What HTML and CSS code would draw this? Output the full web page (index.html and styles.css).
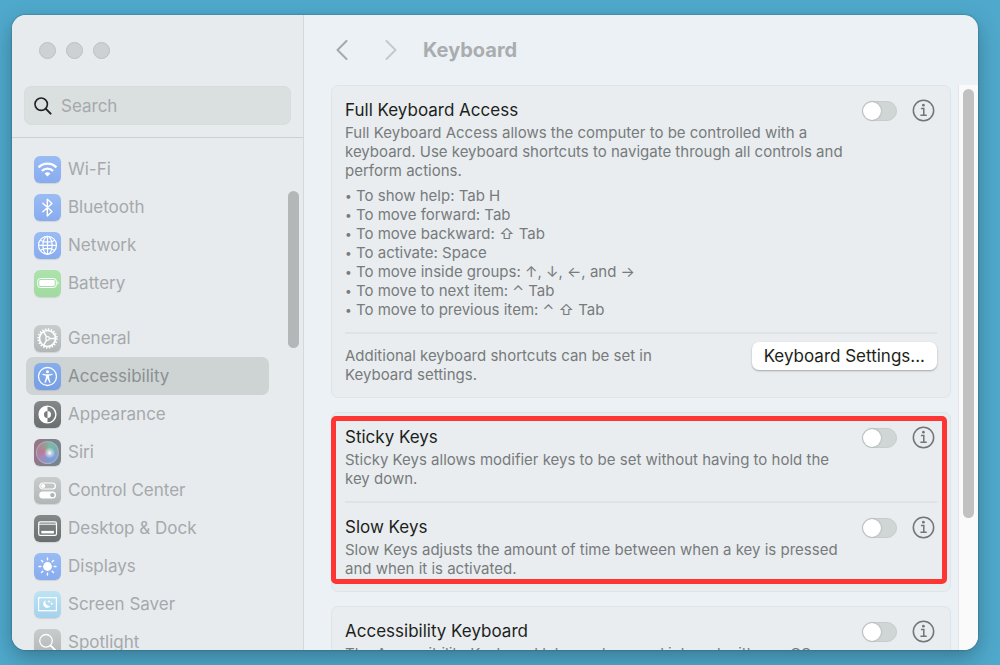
FILE: index.html
```html
<!DOCTYPE html>
<html lang="en">
<head>
  <meta charset="UTF-8">
  <meta name="viewport" content="width=device-width, initial-scale=1.0">
  <title>Keyboard</title>
  <link rel="stylesheet" href="styles.css">
</head>
<body>
  <div class="window">

    <aside class="sidebar">
      <div class="window-buttons">
        <button type="button" aria-label="Close"></button>
        <button type="button" aria-label="Minimize"></button>
        <button type="button" aria-label="Zoom"></button>
      </div>

      <label class="search">
        <svg width="18" height="18" viewBox="0 0 18 18" fill="none" stroke="#222" stroke-linecap="round"><circle cx="7.2" cy="7.2" r="6.2" stroke-width="1.6"/><path d="M11.9 11.9 16.6 16.6" stroke-width="2"/></svg>
        <input type="search" placeholder="Search" aria-label="Search">
      </label>

      <nav class="sidebar-nav">
        <ul>
          <li><a href="#wifi"><span class="icon blue"><svg viewBox="0 0 27 27" fill="none" stroke="#fff" stroke-width="2.3"><path d="M4.6 11.4a12.6 12.6 0 0 1 17.8 0M7.9 14.9a8 8 0 0 1 11.2 0"/><path d="M10.6 17.6a4.2 4.2 0 0 1 5.8 0L13.5 20.6z" fill="#fff" stroke="none"/></svg></span>Wi-Fi</a></li>
          <li><a href="#bluetooth"><span class="icon blue"><svg viewBox="0 0 27 27" fill="none" stroke="#fff" stroke-width="1.4" stroke-linejoin="round" stroke-linecap="round"><path d="M8.8 9.2 18 17.6 13.3 21.9V5.2L18 9.4 8.8 17.8"/></svg></span>Bluetooth</a></li>
          <li><a href="#network"><span class="icon blue"><svg viewBox="0 0 27 27" fill="none" stroke="#fff" stroke-width="1.2"><circle cx="13.5" cy="13.3" r="9"/><path d="M13.5 4.3v18M4.5 13.3h18M6.3 8.2c4.2 2.6 10.2 2.6 14.4 0M6.3 18.4c4.2-2.6 10.2-2.6 14.4 0"/><ellipse cx="13.5" cy="13.3" rx="4.6" ry="9"/></svg></span>Network</a></li>
          <li><a href="#battery"><span class="icon green"><svg viewBox="0 0 27 27"><rect x="3.7" y="8.5" width="18.6" height="9" rx="2.6" fill="none" stroke="#fff"/><rect x="5.3" y="10.1" width="15.4" height="5.8" rx="1.2" fill="#fff"/><path d="M23.5 11.3c1.5.5 1.5 2.9 0 3.4z" fill="#fff"/></svg></span>Battery</a></li>
        </ul>
        <ul>
          <li><a href="#general"><span class="icon gray"><svg viewBox="0 0 27 27" fill="none" stroke="#fff"><circle cx="13.5" cy="13.5" r="8" stroke-width="1.7"/><circle cx="13.5" cy="13.5" r="9.4" stroke-width="1.6" stroke-dasharray="1.48 1.48"/><circle cx="13.5" cy="13.5" r="1.8" stroke-width="1.2"/><path d="M15.4 13.5h6.1M12.6 11.9 9.5 6.6M12.6 15.1l-3.1 5.3" stroke-width="1.4"/></svg></span>General</a></li>
          <li><a href="#accessibility" class="selected" aria-current="page"><span class="icon blue"><svg viewBox="0 0 27 27" fill="none" stroke="#fff"><circle cx="13.5" cy="13.5" r="9" stroke-width="1.3"/><circle cx="13.5" cy="8.8" r="1.5" fill="#fff" stroke="none"/><path d="M8.9 11.3l3.3.8h2.6l3.3-.8" stroke-width="1.2" stroke-linecap="round"/><path d="M12.2 11.7h2.6l.3 3.3 1.4 4.5-1 .3-2-4.6-2 4.6-1-.3 1.4-4.5z" fill="#fff" stroke-width=".2"/></svg></span>Accessibility</a></li>
          <li><a href="#appearance"><span class="icon dark"><svg viewBox="0 0 27 27"><circle cx="13.5" cy="13.5" r="8.4" fill="none" stroke="#fff" stroke-width="1.4"/><path d="M13.5 5.1a8.4 8.4 0 0 0 0 16.8v-4.900a3.500 3.500 0 0 1 0-7z" fill="#fff"/><path d="M13.500 10a3.500 3.500 0 0 1 0 7z" fill="#fff"/></svg></span>Appearance</a></li>
          <li><a href="#siri"><span class="icon siri"><span class="siri-orb"></span></span>Siri</a></li>
          <li><a href="#control-center"><span class="icon gray"><svg viewBox="0 0 27 27"><rect x="5.8" y="6" width="15.6" height="6" rx="3" fill="none" stroke="#fff" stroke-width="1.2"/><circle cx="9.1" cy="9" r="2.1" fill="#fff"/><rect x="5.2" y="14.6" width="16.8" height="7" rx="3.5" fill="#fff"/><circle cx="18.4" cy="18.1" r="2.2" fill="#aeb1b2"/></svg></span>Control Center</a></li>
          <li><a href="#desktop-dock"><span class="icon dark"><svg viewBox="0 0 27 27"><rect x="4.7" y="6.8" width="17.8" height="13.6" rx="1.6" fill="none" stroke="#fff" stroke-width="1.2"/><path d="M4.7 9.2h17.8" stroke="#fff"/><rect x="7.3" y="15.9" width="12.6" height="2.5" fill="#fff"/></svg></span>Desktop &amp; Dock</a></li>
          <li><a href="#displays"><span class="icon blue"><svg viewBox="0 0 27 27" stroke="#fff" stroke-width="1.4" stroke-linecap="round"><circle cx="13.5" cy="13.5" r="4.4" fill="#fff" stroke="none"/><path d="M13.5 5v1.8M13.5 20.2V22M5 13.5h1.8M20.2 13.5H22M7.5 7.5l1.3 1.3M18.2 18.2l1.3 1.3M7.5 19.5l1.3-1.3M18.2 8.8l1.3-1.3"/></svg></span>Displays</a></li>
          <li><a href="#screen-saver"><span class="icon cyan"><svg viewBox="0 0 27 27"><rect x="4.6" y="6.7" width="17.8" height="13" fill="none" stroke="#fff" stroke-width="1.2"/><path d="M11.8 9.3a3.9 3.9 0 1 0 4.8 5.4 3.9 3.9 0 0 1-4.8-5.4z" fill="#fff"/><path d="M15 8.7l.5 1.2 1.2.5-1.2.5-.5 1.200-.5-1.200-1.200-.5 1.200-.5zM17.800 11.100l.5 1.200 1.200.5-1.200.5-.5 1.200-.5-1.200-1.200-.5 1.200-.5z" fill="#fff"/></svg></span>Screen Saver</a></li>
          <li><a href="#spotlight"><span class="icon gray"><svg viewBox="0 0 27 27" fill="none" stroke="#fff" stroke-linecap="round"><circle cx="12" cy="11.8" r="6.3" stroke-width="1.3"/><path d="M16.7 16.6l4.3 4.3" stroke-width="1.8"/></svg></span>Spotlight</a></li>
        </ul>
        <div class="sidebar-thumb"></div>
      </nav>
    </aside>

    <main class="main">
      <header class="toolbar">
        <button type="button" class="back" aria-label="Back"><svg width="12" height="20" viewBox="0 0 12 20"><path d="M10.5 1 1.5 10l9 9"/></svg></button>
        <button type="button" class="forward" aria-label="Forward" disabled><svg width="12" height="20" viewBox="0 0 12 20"><path d="M1.5 1l9 9-9 9"/></svg></button>
        <h1>Keyboard</h1>
      </header>

      <div class="scroll-area">
        <div class="cards">
          <section class="card">
            <div class="row">
              <div class="text">
                <h2><label for="full-access">Full Keyboard Access</label></h2>
                <p>Full Keyboard Access allows the computer to be controlled with a<br>keyboard. Use keyboard shortcuts to navigate through all controls and<br>perform actions.</p>
                <ul class="shortcuts">
                  <li>To show help: Tab H</li>
                  <li>To move forward: Tab</li>
                  <li>To move backward: ⇧ Tab</li>
                  <li>To activate: Space</li>
                  <li>To move inside groups: ↑, ↓, ←, and →</li>
                  <li>To move to next item: ⌃ Tab</li>
                  <li>To move to previous item: ⌃ ⇧ Tab</li>
                </ul>
              </div>
              <div class="controls">
                <input type="checkbox" role="switch" class="switch" id="full-access">
                <button type="button" class="info" aria-label="About Full Keyboard Access"><svg viewBox="0 0 24 24"><circle cx="12" cy="12" r="10.6"/><path d="M9.3 9.8h3v7M8.8 17h6.6"/><circle class="dot" cx="11.9" cy="6.4" r="1.4"/></svg></button>
              </div>
            </div>
            <div class="row">
              <p class="text">Additional keyboard shortcuts can be set in<br>Keyboard settings.</p>
              <button type="button" class="push-button">Keyboard Settings...</button>
            </div>
          </section>

          <section class="card highlighted">
            <div class="row">
              <div class="text">
                <h2><label for="sticky-keys">Sticky Keys</label></h2>
                <p>Sticky Keys allows modifier keys to be set without having to hold the<br>key down.</p>
              </div>
              <div class="controls">
                <input type="checkbox" role="switch" class="switch" id="sticky-keys">
                <button type="button" class="info" aria-label="About Sticky Keys"><svg viewBox="0 0 24 24"><circle cx="12" cy="12" r="10.6"/><path d="M9.3 9.8h3v7M8.8 17h6.6"/><circle class="dot" cx="11.9" cy="6.4" r="1.4"/></svg></button>
              </div>
            </div>
            <div class="row">
              <div class="text">
                <h2><label for="slow-keys">Slow Keys</label></h2>
                <p>Slow Keys adjusts the amount of time between when a key is pressed<br>and when it is activated.</p>
              </div>
              <div class="controls">
                <input type="checkbox" role="switch" class="switch" id="slow-keys">
                <button type="button" class="info" aria-label="About Slow Keys"><svg viewBox="0 0 24 24"><circle cx="12" cy="12" r="10.6"/><path d="M9.3 9.8h3v7M8.8 17h6.6"/><circle class="dot" cx="11.9" cy="6.4" r="1.4"/></svg></button>
              </div>
            </div>
          </section>

          <section class="card">
            <div class="row">
              <div class="text">
                <h2><label for="accessibility-keyboard">Accessibility Keyboard</label></h2>
                <p>The Accessibility Keyboard lets you type and interact with macOS</p>
              </div>
              <div class="controls">
                <input type="checkbox" role="switch" class="switch" id="accessibility-keyboard">
                <button type="button" class="info" aria-label="About Accessibility Keyboard"><svg viewBox="0 0 24 24"><circle cx="12" cy="12" r="10.6"/><path d="M9.3 9.8h3v7M8.8 17h6.6"/><circle class="dot" cx="11.9" cy="6.4" r="1.4"/></svg></button>
              </div>
            </div>
          </section>
        </div>
        <div class="scrollbar"><div class="thumb"></div></div>
      </div>
    </main>

  </div>
</body>
</html>
```
FILE: styles.css
```css
:root {
  --font: Inter, "Liberation Sans", sans-serif;
  --desktop: #4fa9cc;
  --sidebar-bg: #e7ebee;
  --main-bg: #ecf1f5;
  --card-bg: #e9edf0;
  --line: #dfe3e5;
  --text: #1d1f20;
  --text-soft: #777b7c;
  --text-dim: #a5a9ab;
  --mark: #fd3634;
}

* {
  box-sizing: border-box;
}

body {
  margin: 0;
  height: 100vh;
  padding: 15px 22px 15px 12px;
  overflow: hidden;
  background: var(--desktop);
  color: var(--text);
  font-family: var(--font);
  font-size: 15px;
}

button {
  padding: 0;
  border: 0;
  background: none;
  font: inherit;
  color: inherit;
}

ul {
  margin: 0;
  padding: 0;
  list-style: none;
}

.window {
  display: flex;
  height: 100%;
  overflow: hidden;
  border-radius: 14px;
  background: var(--main-bg);
  box-shadow: 0 0 2px rgba(0, 0, 0, 0.4), 0 8px 22px rgba(0, 0, 0, 0.28);
}

/* sidebar */

.sidebar {
  display: flex;
  flex-direction: column;
  flex: none;
  width: 292px;
  background: var(--sidebar-bg);
  border-right: 1px solid #d3d8db;
}

.window-buttons {
  display: flex;
  gap: 10px;
  padding: 27px 27px 0;
}

.window-buttons button {
  width: 17px;
  height: 17px;
  border: 1px solid #bcc0c2;
  border-radius: 50%;
  background: #cdd1d3;
}

.search {
  display: flex;
  align-items: center;
  gap: 9px;
  height: 39px;
  margin: 27px 12px 12px;
  padding: 0 9px;
  border: 1px solid #d7dcdd;
  border-radius: 7px;
  background: #dadfe0;
}

.search input {
  flex: 1;
  min-width: 0;
  padding: 0;
  border: 0;
  outline: 0;
  background: none;
  font: inherit;
  font-size: 17px;
}

.search input::placeholder {
  color: var(--text-dim);
}

.sidebar-nav {
  position: relative;
  flex: 1;
  min-height: 0;
  overflow: hidden;
  padding: 12px 14px 0;
  border-top: 1px solid #cbd1d4;
}

.sidebar-nav ul + ul {
  margin-top: 17px;
}

.sidebar-nav a {
  display: flex;
  align-items: center;
  gap: 7px;
  height: 38px;
  margin-right: 20px;
  padding: 0 8px;
  border-radius: 7px;
  color: var(--text-dim);
  font-size: 17px;
  text-decoration: none;
}

.sidebar-nav a.selected {
  background: #ced4d4;
  color: #8b9091;
}

.sidebar-thumb {
  position: absolute;
  top: 53px;
  right: 4px;
  width: 11px;
  height: 157px;
  border-radius: 6px;
  background: #b3b7b8;
}

.icon {
  width: 27px;
  height: 27px;
  border-radius: 6px;
  box-shadow: 0 1px 1px rgba(0, 0, 0, 0.1);
}

.icon svg {
  display: block;
}

.icon.blue {
  background: linear-gradient(#9abcf4, #87abee);
}

.selected .icon.blue {
  background: linear-gradient(#86aeec, #779de4);
}

.icon.green {
  background: linear-gradient(#aee2ac, #a0dba0);
}

.icon.gray {
  background: linear-gradient(#c8cccd, #b2b6b7);
}

.icon.dark {
  background: linear-gradient(#858889, #6b6e6f);
}

.icon.cyan {
  background: linear-gradient(#bde4f4, #a4d1ea);
}

.icon.siri {
  padding: 2px;
  background: linear-gradient(100deg, #9d7288, #7f8088 50%, #75868e);
}

.siri-orb {
  display: block;
  height: 23px;
  border: 1px solid rgba(220, 220, 230, 0.3);
  border-radius: 50%;
  background:
    radial-gradient(circle at 60% 52%, #fff 0, rgba(255, 255, 255, 0.5) 14%, transparent 34%),
    conic-gradient(from 20deg, #7cb8a6, #78aeb4, #829fd8, #7f99d2, #a58ab8, #b97a98, #a0958f, #7cb8a6);
}

/* right pane */

.main {
  display: flex;
  flex-direction: column;
  flex: 1;
  min-width: 0;
}

.toolbar {
  display: flex;
  align-items: center;
  flex: none;
  height: 70px;
  padding: 0 32px;
}

.toolbar svg {
  display: block;
  fill: none;
  stroke: #a4a8aa;
  stroke-width: 2;
  stroke-linecap: round;
  stroke-linejoin: round;
}

.toolbar .forward {
  margin: 0 26px 0 37px;
}

.toolbar .forward svg {
  stroke: #c5c9cc;
}

h1 {
  margin: 0;
  color: #a9adaf;
  font-size: 20px;
  font-weight: 700;
}

.scroll-area {
  display: flex;
  flex: 1;
  min-height: 0;
}

.cards {
  flex: 1;
  min-width: 0;
  padding: 0 7px 0 27px;
  overflow: hidden;
}

.card {
  position: relative;
  margin-bottom: 14px;
  padding: 0 13px;
  border: 1px solid #dfe4e6;
  border-radius: 7px;
  background: var(--card-bg);
}

/* red frame drawn over the card */
.card.highlighted::after {
  content: "";
  position: absolute;
  inset: 3px 3px 7px -1px;
  border: 5px solid var(--mark);
  border-radius: 5px;
  pointer-events: none;
}

.row {
  display: flex;
  justify-content: space-between;
  padding: 12px 0 13px;
}

.row + .row {
  border-top: 2px solid var(--line);
}

.text {
  color: var(--text-soft);
  line-height: 19px;
  white-space: nowrap;
}

.text p,
p.text {
  margin: 0;
}

h2 {
  margin: 0 0 1px;
  color: var(--text);
  font-size: 17px;
  font-weight: 400;
  line-height: 24px;
}

.shortcuts {
  margin-top: 6px;
}

.shortcuts li {
  display: flex;
}

.shortcuts li::before {
  content: "•";
  width: 11px;
  font-size: 12px;
}

.controls {
  display: flex;
  align-items: center;
  gap: 15px;
  height: 25px;
  padding-right: 2px;
}

.switch {
  appearance: none;
  width: 35px;
  height: 20px;
  margin: 0;
  border: 1px solid #c7cccd;
  border-radius: 10px;
  background: #d0d5d6;
}

.switch::before {
  content: "";
  display: block;
  width: 18px;
  height: 18px;
  border-radius: 50%;
  background: #fff;
  box-shadow: 0 0 2px rgba(0, 0, 0, 0.3);
}

.switch:checked::before {
  margin-left: 15px;
}

.info svg {
  display: block;
  width: 23px;
  height: 23px;
  fill: none;
  stroke: #727677;
  stroke-width: 1.6;
}

.info .dot {
  fill: #727677;
  stroke: none;
}

.push-button {
  height: 28px;
  margin-top: -4px;
  padding: 0 12px;
  border-radius: 7px;
  background: #fff;
  box-shadow: 0 1px 2px rgba(0, 0, 0, 0.3);
  font-size: 17px;
}

.scrollbar {
  flex: none;
  width: 20px;
  padding: 4px;
  border-left: 1px solid #e3e5e6;
  background: #fafafa;
}

.scrollbar .thumb {
  width: 11px;
  height: 77%;
  border-radius: 6px;
  background: #c1c1c1;
}
```
